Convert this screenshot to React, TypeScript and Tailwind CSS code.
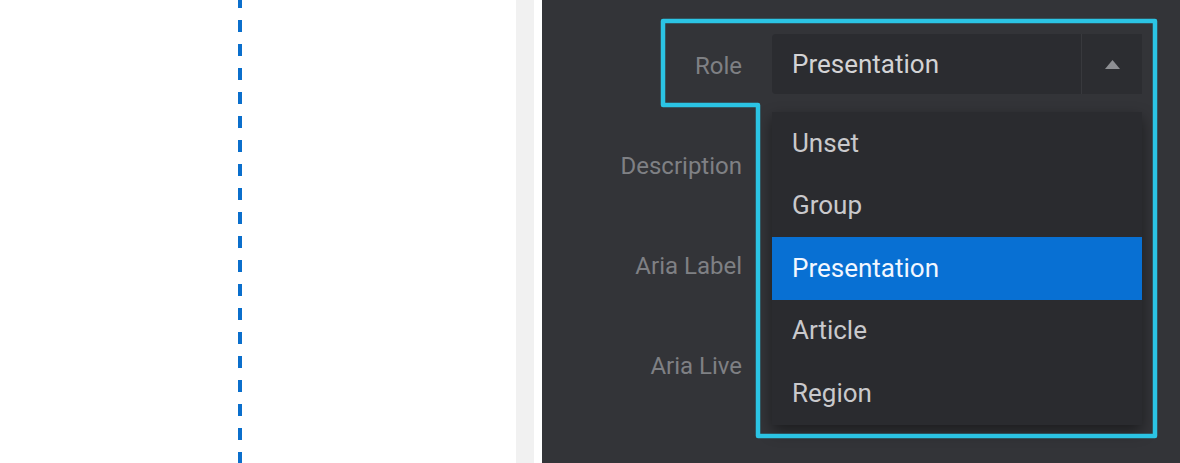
const rows = ["Role", "Description", "Aria Label", "Aria Live"];
const options = ["Unset", "Group", "Presentation", "Article", "Region"];

const RoleSelect = () => {
  return (
    <div className="relative w-[370px]">
      <div className="flex h-[60px] items-stretch rounded-[4px] bg-[#2b2c30]">
        <div className="flex flex-1 items-center pl-[20px] text-[26px] text-[#d3d3d5]">
          Presentation
        </div>
        <div className="flex w-[61px] items-center justify-center border-l border-[#38393d] bg-[#2c2d31]">
          <svg width="15" height="9" viewBox="0 0 15 9">
            <path d="M7.5 0 L15 9 L0 9 Z" fill="#8e8f93" />
          </svg>
        </div>
      </div>
      <div className="absolute left-0 top-[78px] w-full bg-[#2a2b2f] shadow-[0_6px_14px_rgba(0,0,0,0.45)]">
        {options.map((opt) => (
          <div
            key={opt}
            className={
              opt === "Presentation"
                ? "flex h-[62.5px] items-center bg-[#0870d3] pl-[20px] text-[26px] text-[#f2f7ff]"
                : "flex h-[62.5px] items-center pl-[20px] text-[26px] text-[#c9c9cc]"
            }
          >
            {opt}
          </div>
        ))}
      </div>
    </div>
  );
};

export default function App() {
  return (
    <div
      className="relative flex h-[463px] w-[1180px] overflow-hidden bg-white"
      style={{ fontFamily: "Roboto, 'Liberation Sans', sans-serif" }}
    >
      <div className="h-full w-[516px] bg-white">
        <div className="ml-[238px] h-full w-[4px] bg-[repeating-linear-gradient(to_bottom,#0b6fcc_0px,#0b6fcc_8px,transparent_8px,transparent_20px,#0b6fcc_20px,#0b6fcc_24px)]" />
      </div>
      <div className="h-full w-[18px] bg-[#f1f1f1]" />
      <div className="h-full w-[8px] bg-white" />
      <div className="flex h-full flex-1 flex-col gap-[40px] bg-[#333438] pt-[34px]">
        {rows.map((label) => (
          <div key={label} className="flex h-[60px] items-center">
            <div className="w-[200px] pt-[3px] text-right text-[24px] text-[#7f8084]">{label}</div>
            <div className="ml-[30px]">{label === "Role" && <RoleSelect />}</div>
          </div>
        ))}
      </div>
      <svg
        className="pointer-events-none absolute left-0 top-0"
        width="1180"
        height="463"
        viewBox="0 0 1180 463"
      >
        <path
          d="M663 21 L1155 21 L1155 436 L758 436 L758 105 L663 105 Z"
          fill="none"
          stroke="#2bc4e4"
          strokeWidth="4.5"
          strokeLinejoin="round"
        />
      </svg>
    </div>
  );
}
